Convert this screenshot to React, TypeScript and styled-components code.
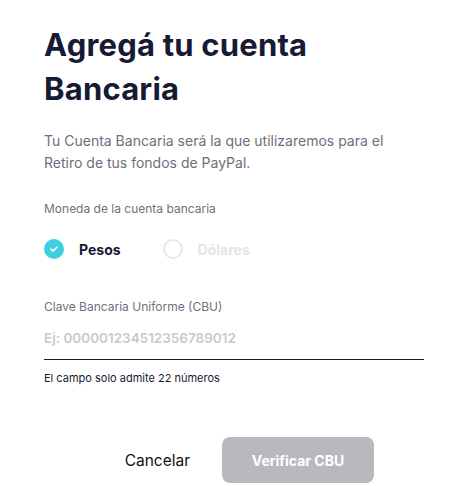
import React, { useState } from "react";
import styled, { createGlobalStyle } from "styled-components";

const GlobalStyle = createGlobalStyle`
  html, body {
    margin: 0;
    padding: 0;
    background: #ffffff;
  }
  body {
    font-family: "Inter", "Noto Sans", sans-serif;
    -webkit-font-smoothing: antialiased;
  }
`;

const Page = styled.div`
  width: 474px;
  height: 486px;
  box-sizing: border-box;
  padding: 23px 50px 0 44px;
  display: flex;
  flex-direction: column;
`;

const Title = styled.h1`
  margin: 0;
  font-size: 31px;
  line-height: 44px;
  font-weight: 700;
  color: #161a33;
  letter-spacing: 0.2px;
`;

const Intro = styled.p`
  margin: 19px 0 0;
  font-size: 14px;
  line-height: 22px;
  color: #6e6e7c;
`;

const FieldLabel = styled.div`
  font-size: 12px;
  line-height: 18px;
  color: #707080;
`;

const CurrencyLabel = styled(FieldLabel)`
  margin-top: 26px;
`;

const RadioRow = styled.div`
  display: flex;
  align-items: center;
  gap: 42px;
  margin-top: 21px;
`;

const RadioOption = styled.label<{ $disabled?: boolean }>`
  display: flex;
  align-items: center;
  gap: 15px;
  font-size: 14px;
  font-weight: 700;
  color: ${(p) => (p.$disabled ? "#e4e4e8" : "#161a33")};
  cursor: ${(p) => (p.$disabled ? "default" : "pointer")};
`;

const RadioDot = styled.span<{ $checked?: boolean }>`
  width: 20px;
  height: 20px;
  border-radius: 50%;
  box-sizing: border-box;
  display: flex;
  align-items: center;
  justify-content: center;
  background: ${(p) => (p.$checked ? "#3ccfdf" : "transparent")};
  border: ${(p) => (p.$checked ? "none" : "2px solid #e8e8ec")};
`;

const CbuLabel = styled(FieldLabel)`
  margin-top: 39px;
`;

const Input = styled.input`
  margin-top: 7px;
  width: 100%;
  box-sizing: border-box;
  border: none;
  border-bottom: 1px solid #161a33;
  padding: 6px 0 12px;
  font-family: inherit;
  font-size: 13.5px;
  line-height: 18px;
  height: 37px;
  font-weight: 600;
  color: #161a33;
  caret-color: #8a8a96;
  outline: none;
  &::placeholder {
    color: #c9c9cf;
  }
`;

const Helper = styled.div`
  margin-top: 11px;
  font-size: 11px;
  color: #161a33;
`;

const Actions = styled.div`
  margin-top: 52px;
  display: flex;
  align-items: center;
  justify-content: flex-end;
  gap: 32px;
  padding-right: 50px;
`;

const TextButton = styled.button`
  background: none;
  border: none;
  padding: 0;
  font-family: inherit;
  font-size: 15.5px;
  color: #111111;
  cursor: pointer;
`;

const PrimaryButton = styled.button`
  width: 152px;
  height: 46px;
  border: none;
  border-radius: 8px;
  background: #b8b9bf;
  color: #ffffff;
  font-family: inherit;
  font-size: 14px;
  font-weight: 700;
  cursor: not-allowed;
`;

const Check = () => (
  <svg width="10" height="10" viewBox="0 0 10 10" fill="none">
    <path
      d="M2 5.2 L4.1 7.2 L8 3"
      stroke="#ffffff"
      strokeWidth="1.6"
      strokeLinecap="round"
      strokeLinejoin="round"
    />
  </svg>
);

export default function App() {
  const [cbu, setCbu] = useState("");
  return (
    <Page>
      <GlobalStyle />
      <Title>
        Agregá tu cuenta
        <br />
        Bancaria
      </Title>
      <Intro>
        Tu Cuenta Bancaria será la que utilizaremos para el
        <br />
        Retiro de tus fondos de PayPal.
      </Intro>
      <CurrencyLabel>Moneda de la cuenta bancaria</CurrencyLabel>
      <RadioRow>
        <RadioOption>
          <RadioDot $checked>
            <Check />
          </RadioDot>
          Pesos
        </RadioOption>
        <RadioOption $disabled>
          <RadioDot />
          Dólares
        </RadioOption>
      </RadioRow>
      <CbuLabel>Clave Bancaria Uniforme (CBU)</CbuLabel>
      <Input
        autoFocus
        value={cbu}
        onChange={(e) => setCbu(e.target.value.replace(/\D/g, "").slice(0, 22))}
        placeholder="Ej: 000001234512356789012"
      />
      <Helper>El campo solo admite 22 números</Helper>
      <Actions>
        <TextButton>Cancelar</TextButton>
        <PrimaryButton disabled>Verificar CBU</PrimaryButton>
      </Actions>
    </Page>
  );
}
